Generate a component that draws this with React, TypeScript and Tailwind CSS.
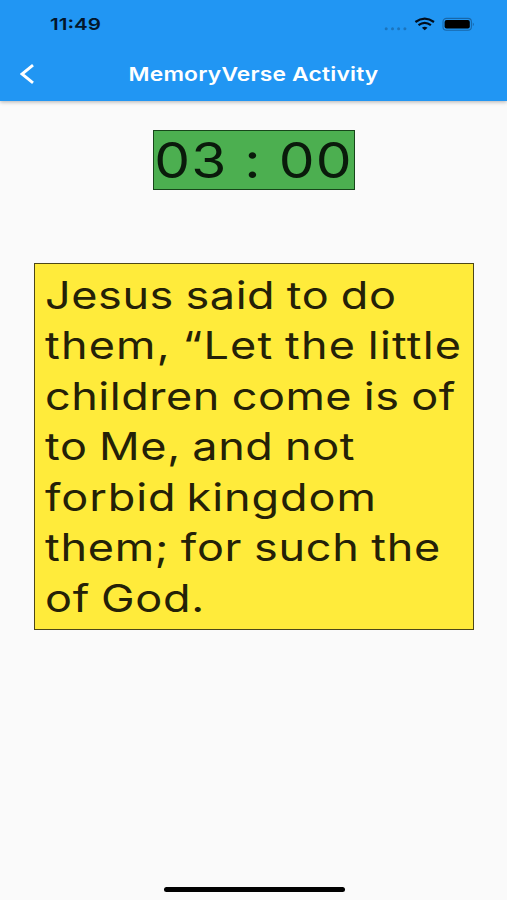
const verse = [
  { text: 'Jesus said to do', spacing: 'tracking-[0.48px] [word-spacing:-1.4px]' },
  { text: 'them, “Let the little', spacing: 'tracking-[0.98px] [word-spacing:-1.8px]' },
  { text: 'children come is of', spacing: 'tracking-[0.44px] [word-spacing:-1.2px]' },
  { text: 'to Me, and not', spacing: 'tracking-[0.5px] [word-spacing:-1.4px]' },
  { text: 'forbid kingdom', spacing: 'tracking-[0.78px] [word-spacing:-3px]' },
  { text: 'them; for such the', spacing: 'tracking-[0.6px] [word-spacing:-1.4px]' },
  { text: 'of God.', spacing: 'tracking-[0.55px] [word-spacing:-1.8px]' },
];

function StatusBar() {
  return (
    <div className="flex h-[48px] items-center pl-[50px] pr-[32px]">
      <span className="origin-left scale-x-[1.25] pt-px text-[16.5px] font-semibold leading-none text-[#03162b]">11:49</span>
      <svg className="ml-auto" width="92" height="16" viewBox="0 0 92 16">
        <g fill="#1b74bd">
          <circle cx="3.2" cy="12.7" r="1.5" />
          <circle cx="9.5" cy="12.7" r="1.5" />
          <circle cx="15.6" cy="12.7" r="1.5" />
          <circle cx="21.9" cy="12.7" r="1.5" />
        </g>
        <g fill="none" stroke="#020d1b" strokeWidth="2.2">
          <path d="M32.4 6Q41.7-.8 51 6" />
          <path d="M35.5 9.2Q41.7 4.6 47.9 9.2" />
        </g>
        <path d="M38.9 11.8Q41.7 9.6 44.5 11.8L41.7 14.2Z" fill="#020d1b" />
        <rect x="60" y="2.4" width="28.4" height="11.8" rx="3.4" fill="none" stroke="#1767aa" strokeWidth="1.1" />
        <rect x="61.6" y="4" width="25.2" height="8.6" rx="2" fill="#000" />
        <path d="M89.8 6.4Q92 8.3 89.8 10.2Z" fill="#1767aa" />
      </svg>
    </div>
  );
}

export default function App() {
  return (
    <div className="flex h-[900px] w-[507px] flex-col overflow-hidden bg-[#fafafa] font-['Inter',sans-serif]">
      <header className="h-[101px] shrink-0 bg-[#2196f3] shadow-[0_1px_4px_rgba(0,0,0,0.3)]">
        <StatusBar />
        <div className="grid h-[52px] grid-cols-[54px_1fr_54px] items-center">
          <svg className="ml-[20px]" width="16" height="20" viewBox="0 0 16 20" fill="none" stroke="#fff" strokeWidth="2.9">
            <path d="M13 1.2L2 10L13 18.8" />
          </svg>
          <h1 className="scale-x-[1.2] whitespace-nowrap text-center text-[19px] font-semibold leading-none tracking-[0.16px] text-white">
            MemoryVerse Activity
          </h1>
        </div>
      </header>
      <main className="flex flex-1 flex-col items-center pt-[29px]">
        <div className="ml-px flex h-[60px] w-[202px] items-center justify-center border border-[#17451a] bg-[#4caf50]">
          <span className="scale-x-[1.16] whitespace-pre pr-[1px] text-[49px] leading-none tracking-[0.9px] text-[#0a1a0b] [font-feature-settings:'calt'_0]">03 : 00</span>
        </div>
        <div className="mt-[73px] h-[367px] w-[440px] border border-[#4d4718] bg-[#ffeb3b] pl-[10.4px] pt-[6.5px]">
          <p className="w-[350px] origin-left scale-x-[1.2] text-[37.5px] leading-[50.5px] text-[#242107]">
            {verse.map(({ text, spacing }) => (
              <span key={text} className={`block whitespace-nowrap ${spacing}`}>{text}</span>
            ))}
          </p>
        </div>
      </main>
      <footer className="flex h-[13px] shrink-0 justify-center">
        <div className="ml-px h-[5px] w-[181px] rounded-full bg-black" />
      </footer>
    </div>
  );
}
